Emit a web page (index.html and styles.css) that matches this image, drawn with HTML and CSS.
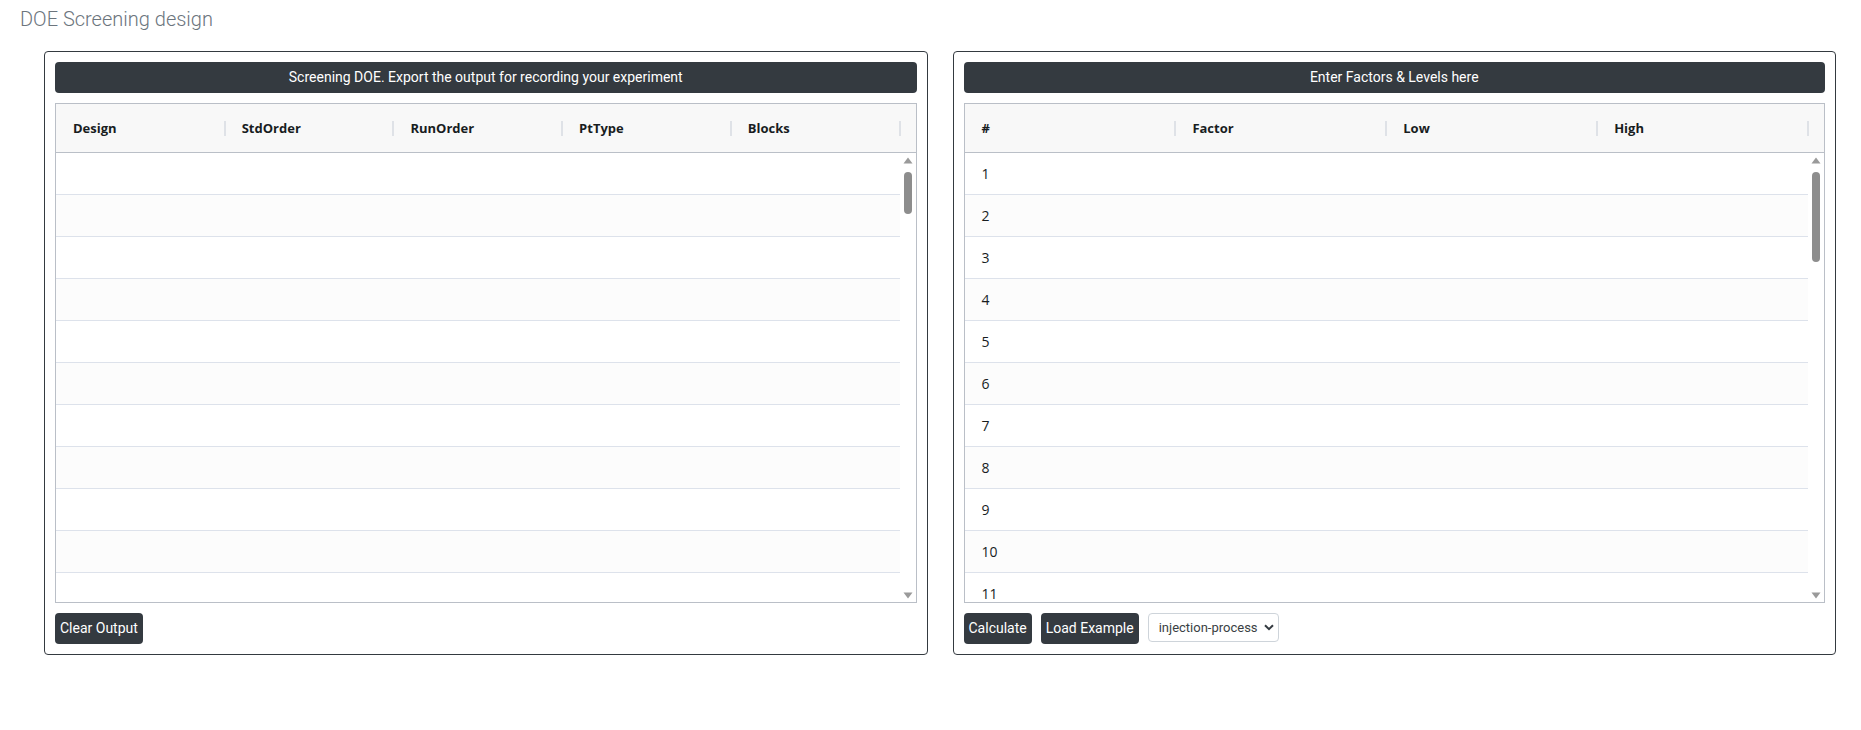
FILE: index.html
```html
<!DOCTYPE html>
<html>
<head>
<meta charset="utf-8">
<link rel="stylesheet" href="styles.css">
</head>
<body>
<h1 class="title">DOE Screening design</h1>
<main class="layout">
  <section class="panel">
    <div class="bar">Screening DOE. Export the output for recording your experiment</div>
    <div class="grid">
      <div class="grid-head">
        <div class="hcell">Design</div>
        <div class="hcell">StdOrder</div>
        <div class="hcell">RunOrder</div>
        <div class="hcell">PtType</div>
        <div class="hcell">Blocks</div>
      </div>
      <div class="grid-body">
        <div class="rows">
          <div class="row"></div><div class="row"></div><div class="row"></div><div class="row"></div>
          <div class="row"></div><div class="row"></div><div class="row"></div><div class="row"></div>
          <div class="row"></div><div class="row"></div><div class="row"></div><div class="row"></div>
        </div>
        <div class="sbar">
          <svg class="arrow" width="10" height="7" viewBox="0 0 10 7"><path d="M5 0.5 L9.5 6.5 L0.5 6.5 Z" fill="#9a9a9a"/></svg>
          <div class="track"><div class="thumb thumb-short"></div></div>
          <svg class="arrow" width="10" height="7" viewBox="0 0 10 7"><path d="M0.5 0.5 L9.5 0.5 L5 6.5 Z" fill="#9a9a9a"/></svg>
        </div>
      </div>
    </div>
    <div class="actions">
      <button class="btn">Clear Output</button>
    </div>
  </section>
  <section class="panel">
    <div class="bar">Enter Factors &amp; Levels here</div>
    <div class="grid">
      <div class="grid-head">
        <div class="hcell">#</div>
        <div class="hcell">Factor</div>
        <div class="hcell">Low</div>
        <div class="hcell">High</div>
      </div>
      <div class="grid-body">
        <div class="rows">
          <div class="row"><div class="cell">1</div><div class="cell"></div><div class="cell"></div><div class="cell"></div></div>
          <div class="row"><div class="cell">2</div><div class="cell"></div><div class="cell"></div><div class="cell"></div></div>
          <div class="row"><div class="cell">3</div><div class="cell"></div><div class="cell"></div><div class="cell"></div></div>
          <div class="row"><div class="cell">4</div><div class="cell"></div><div class="cell"></div><div class="cell"></div></div>
          <div class="row"><div class="cell">5</div><div class="cell"></div><div class="cell"></div><div class="cell"></div></div>
          <div class="row"><div class="cell">6</div><div class="cell"></div><div class="cell"></div><div class="cell"></div></div>
          <div class="row"><div class="cell">7</div><div class="cell"></div><div class="cell"></div><div class="cell"></div></div>
          <div class="row"><div class="cell">8</div><div class="cell"></div><div class="cell"></div><div class="cell"></div></div>
          <div class="row"><div class="cell">9</div><div class="cell"></div><div class="cell"></div><div class="cell"></div></div>
          <div class="row"><div class="cell">10</div><div class="cell"></div><div class="cell"></div><div class="cell"></div></div>
          <div class="row"><div class="cell">11</div><div class="cell"></div><div class="cell"></div><div class="cell"></div></div>
          <div class="row"><div class="cell">12</div><div class="cell"></div><div class="cell"></div><div class="cell"></div></div>
        </div>
        <div class="sbar">
          <svg class="arrow" width="10" height="7" viewBox="0 0 10 7"><path d="M5 0.5 L9.5 6.5 L0.5 6.5 Z" fill="#9a9a9a"/></svg>
          <div class="track"><div class="thumb thumb-long"></div></div>
          <svg class="arrow" width="10" height="7" viewBox="0 0 10 7"><path d="M0.5 0.5 L9.5 0.5 L5 6.5 Z" fill="#9a9a9a"/></svg>
        </div>
      </div>
    </div>
    <div class="actions">
      <button class="btn">Calculate</button>
      <button class="btn">Load Example</button>
      <div class="select">
        <span class="select-text">injection-process</span>
        <svg class="chev" width="10" height="7" viewBox="0 0 10 7"><path d="M1 1.2 L5 5.2 L9 1.2" fill="none" stroke="#343a40" stroke-width="2"/></svg>
      </div>
    </div>
  </section>
</main>
</body>
</html>
```

FILE: styles.css
```css
* { box-sizing: border-box; }

body {
  margin: 0;
  background: #fff;
  font-family: Roboto, "Liberation Sans", sans-serif;
  color: #212529;
}

.title {
  margin: 0;
  padding: 7px 0 0 20px;
  font-size: 20px;
  line-height: 24px;
  font-weight: 300;
  color: #6c757d;
}

.layout {
  display: flex;
  gap: 25px;
  padding: 20px 25px 0 44px;
}

.panel {
  flex: 1 1 0;
  min-width: 0;
  border: 1px solid #343a40;
  border-radius: 4px;
  padding: 10px;
  display: flex;
  flex-direction: column;
  gap: 10px;
}

.bar {
  height: 31px;
  line-height: 31px;
  background: #343a40;
  color: #fff;
  border-radius: 4px;
  text-align: center;
  font-size: 14px;
}

.grid {
  height: 500px;
  border: 1px solid #babfc7;
  display: flex;
  flex-direction: column;
  font-family: "Open Sans", "Noto Sans", sans-serif;
  color: #181d1f;
}

.grid-head {
  height: 49px;
  flex: none;
  display: flex;
  background: #f8f8f8;
  border-bottom: 1px solid #babfc7;
  padding-right: 16px;
}

.hcell {
  flex: 1 1 0;
  display: flex;
  align-items: center;
  padding-left: 17px;
  font-size: 13px;
  font-weight: 700;
  position: relative;
}

.hcell::after {
  content: "";
  position: absolute;
  right: -1px;
  top: 17px;
  width: 2px;
  height: 15px;
  background: #dfe2e7;
}

.grid-body {
  flex: 1;
  min-height: 0;
  display: flex;
}

.rows {
  flex: 1;
  min-width: 0;
  overflow: hidden;
}

.row {
  height: 42px;
  display: flex;
  border-bottom: 1px solid #dde2eb;
  background: #fff;
}

.row:nth-child(even) { background: #fcfcfc; }

.cell {
  flex: 1 1 0;
  display: flex;
  align-items: center;
  padding-left: 17px;
  font-size: 14px;
}

.sbar {
  width: 16px;
  flex: none;
  display: flex;
  flex-direction: column;
  align-items: center;
  padding: 4px 0 3px;
  background: #fff;
}

.arrow { flex: none; display: block; }

.track {
  flex: 1;
  width: 100%;
  display: flex;
  justify-content: center;
  padding-top: 8px;
}

.thumb {
  width: 8px;
  border-radius: 4px;
  background: #8d8d8d;
}

.thumb-short { height: 42px; }
.thumb-long { height: 90px; }

.actions {
  display: flex;
  gap: 9px;
  align-items: flex-start;
}

.btn {
  height: 31px;
  line-height: 31px;
  padding: 0 5px;
  border: 0;
  border-radius: 4px;
  background: #343a40;
  color: #fff;
  font-family: Roboto, "Liberation Sans", sans-serif;
  font-size: 14px;
  white-space: nowrap;
}

.select {
  height: 29px;
  width: 131px;
  border: 1px solid #ced4da;
  border-radius: 4px;
  display: flex;
  align-items: center;
  gap: 6px;
  padding: 0 5px 0 10px;
  font-size: 13px;
  color: #3a3f44;
  white-space: nowrap;
}

.select-text { flex: 1; }

.chev { flex: none; display: block; }
```
